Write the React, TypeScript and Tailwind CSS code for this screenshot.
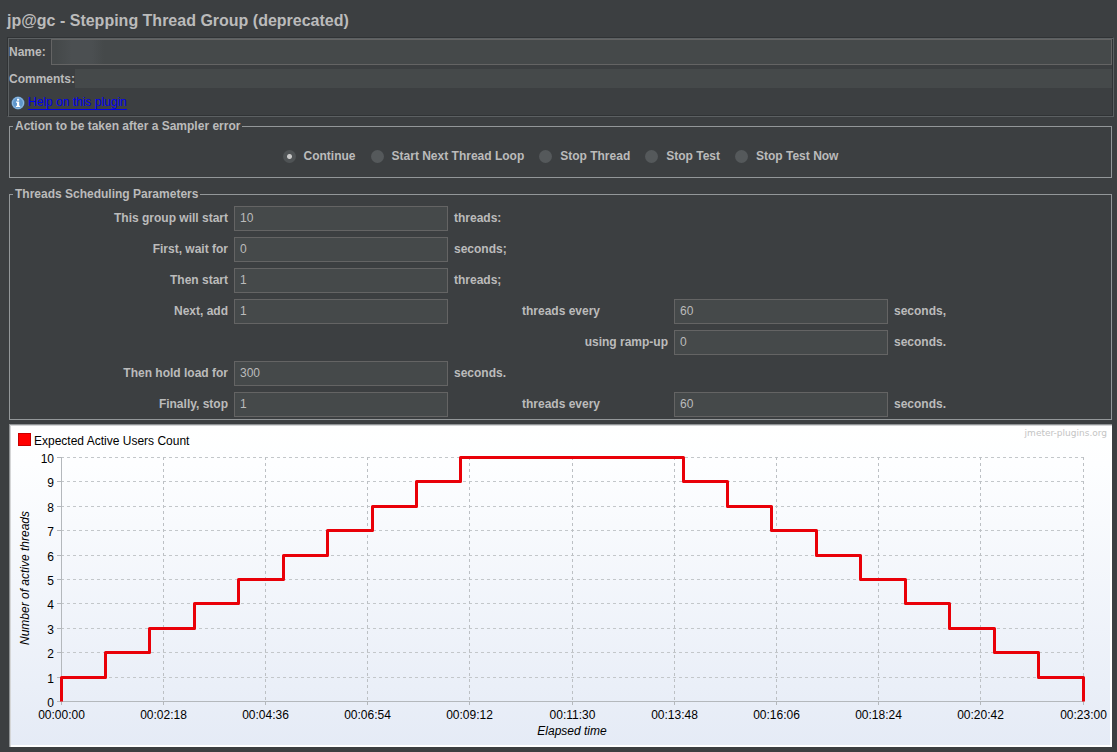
import { useState } from 'react';

const ERROR_ACTIONS = [
	'Continue',
	'Start Next Thread Loop',
	'Stop Thread',
	'Stop Test',
	'Stop Test Now',
];

const TIME_LABELS = [
	'00:00:00',
	'00:02:18',
	'00:04:36',
	'00:06:54',
	'00:09:12',
	'00:11:30',
	'00:13:48',
	'00:16:06',
	'00:18:24',
	'00:20:42',
	'00:23:00',
];

// Plot area inside the 1103x323 chart
const LEFT = 52;
const RIGHT = 1074;
const TOP = 33;
const BOTTOM = 277;
const MINUTES = 23;
const THREADS = 10;

const xAt = (minute: number) =>
	Math.floor(LEFT + (minute * (RIGHT - LEFT)) / MINUTES) + 0.5;
const yAt = (count: number) =>
	Math.round(BOTTOM - (count * (BOTTOM - TOP)) / THREADS) + 0.5;

function buildStepPath() {
	let d = `M${xAt(0)} ${yAt(0)}`;
	for (let i = 1; i <= THREADS; i++) {
		d += ` H${xAt(i - 1)} V${yAt(i)}`;
	}
	for (let i = THREADS - 1; i >= 0; i--) {
		d += ` H${xAt(MINUTES - i)} V${yAt(i)}`;
	}
	return d;
}

function Field({ id, label, value }: { id: string; label: string; value: string }) {
	return (
		<input
			id={id}
			type="text"
			aria-label={label}
			defaultValue={value}
			className="h-[25px] w-full min-w-0 border border-[#646464] bg-[#45494a] px-[5px] pb-[2px] font-normal outline-none focus:border-[#8a9ba8]"
		/>
	);
}

function InfoIcon() {
	return (
		<svg width="14" height="14" viewBox="0 0 14 14" aria-hidden="true">
			<circle cx="7" cy="7" r="6.5" fill="#5f97cc" />
			<circle cx="7" cy="7" r="5.5" fill="none" stroke="#a3c6e4" strokeWidth="0.8" />
			<rect x="6" y="2.7" width="2.2" height="2" fill="#fff" />
			<path d="M5 5.6h3.2v4.2h1v1.2H4.9V9.8H6V6.8H5z" fill="#fff" />
		</svg>
	);
}

function ThreadsChart() {
	return (
		<svg
			viewBox="0 0 1103 323"
			role="img"
			aria-label="Expected Active Users Count"
			className="mx-[2px] mt-1 block h-auto w-[calc(100%-4px)] font-normal"
			fontFamily="'Liberation Sans', Arial, sans-serif"
			fontSize="12"
		>
			<defs>
				<linearGradient id="chartFill" x1="0" y1="0" x2="0" y2="1">
					<stop offset="0" stopColor="#ffffff" />
					<stop offset="0.12" stopColor="#fdfeff" />
					<stop offset="1" stopColor="#e5ebf6" />
				</linearGradient>
			</defs>
			<rect width="1103" height="323" fill="#ffffff" />
			<rect x="2" y="2" width="1099" height="319" fill="url(#chartFill)" />
			<path d="M0 .5H1103M.5 0V323" stroke="#8f9294" />
			<path d="M1 1.5H1103M1.5 1V323" stroke="#d5d6d7" />

			{/* Legend */}
			<rect x="9.5" y="9.5" width="12" height="12" fill="#ff0000" stroke="#c80000" />
			<text x="25" y="21">Expected Active Users Count</text>
			<text
				x="1098"
				y="12"
				fontFamily="'DejaVu Sans', sans-serif"
				fontSize="9"
				textAnchor="end"
				fill="#c4c4c4"
			>
				jmeter-plugins.org
			</text>

			{/* Grid */}
			{Array.from({ length: THREADS + 1 }, (_, i) => (
				<g key={i}>
					{i > 0 && (
						<path
							d={`M${LEFT} ${yAt(i)}H${RIGHT}`}
							stroke="#c3c7ca"
							strokeDasharray="3 3"
						/>
					)}
					<path d={`M${LEFT - 4} ${yAt(i)}h4`} stroke="#b4b8bc" />
					<text x={LEFT - 7} y={yAt(i) + 5} textAnchor="end">
						{i}
					</text>
				</g>
			))}
			{TIME_LABELS.map((label, i) => {
				const x = xAt((i * MINUTES) / 10);
				return (
					<g key={label}>
						{i > 0 && (
							<path
								d={`M${x} ${TOP}V${BOTTOM}`}
								stroke="#bcc0c4"
								strokeDasharray="3 3"
							/>
						)}
						<path d={`M${x} ${BOTTOM}v4`} stroke="#b4b8bc" />
						<text x={x} y="295" textAnchor="middle">
							{label}
						</text>
					</g>
				);
			})}
			<path
				d={`M${LEFT + 0.5} ${TOP}V${BOTTOM + 0.5}H${RIGHT}`}
				fill="none"
				stroke="#b4b8bc"
			/>

			<path
				d={buildStepPath()}
				fill="none"
				stroke="#e90008"
				strokeWidth="3"
				strokeLinejoin="round"
			/>

			{/* Axis titles */}
			<text x="563" y="311" textAnchor="middle" fontStyle="italic">
				Elapsed time
			</text>
			<text
				transform="translate(20 154) rotate(-90)"
				textAnchor="middle"
				fontStyle="italic"
			>
				Number of active threads
			</text>
		</svg>
	);
}

export default function App() {
	const [action, setAction] = useState('Continue');

	return (
		<main className="min-h-screen bg-[#3c3f41] pt-[9px] pr-[3px] pb-[5px] pl-[7px] font-['Liberation_Sans',Arial,sans-serif] text-[12px] leading-[14px] font-bold text-[#bbbbbb]">
			<h1 className="text-base leading-6">jp@gc - Stepping Thread Group (deprecated)</h1>

			{/* Name and comments */}
			<section className="mt-1 border border-t-[#303335] border-r-[#5c6062] border-b-[#5c6062] border-l-[#303335] p-px shadow-[inset_1px_1px_0_#5c6062,inset_-1px_-1px_0_#303335]">
				<div className="flex items-center gap-[5px]">
					<label htmlFor="name">Name:</label>
					<input
						id="name"
						type="text"
						className="h-[26px] min-w-0 flex-1 border border-[#646464] bg-[#45494a] bg-[linear-gradient(90deg,#45494a_4px,#4b4f51_20px,#4b4f51_40px,#45494a_52px)] px-[5px] font-normal outline-none"
					/>
				</div>
				<div className="mt-1 flex items-center">
					<label htmlFor="comments">Comments:</label>
					<input
						id="comments"
						type="text"
						className="h-[19px] min-w-0 flex-1 bg-[#45494a] font-normal outline-none"
					/>
				</div>
				<div className="mt-[7px] mb-[5px] flex items-end gap-[3px] pl-[2px]">
					<InfoIcon />
					<a href="#help" className="border-b border-[#0000ee] font-normal text-[#0000ee]">
						Help on this plugin
					</a>
				</div>
			</section>

			{/* Sampler error action */}
			<fieldset className="mx-[2px] mt-[2px] border border-[#939799] px-[3px] pt-[15px] pb-[13px]">
				<legend className="px-[2px]">Action to be taken after a Sampler error</legend>
				<div className="flex flex-wrap justify-center gap-x-[15px] gap-y-2">
					{ERROR_ACTIONS.map((name) => (
						<label key={name} className="flex h-4 items-center gap-2">
							<input
								type="radio"
								name="error-action"
								checked={action === name}
								onChange={() => setAction(name)}
								className="size-[13px] appearance-none rounded-full bg-[#55595b] checked:bg-[radial-gradient(circle,#c8c8c8_2px,#4f5355_3px)]"
							/>
							{name}
						</label>
					))}
				</div>
			</fieldset>

			{/* Scheduling */}
			<fieldset className="mx-[2px] mt-[9px] border border-[#939799] px-[3px] pt-[5px] pb-[2px]">
				<legend className="px-[2px]">Threads Scheduling Parameters</legend>
				<div className="grid grid-cols-5 items-center gap-[6px] pl-px [&>label]:pb-[2px] [&>span]:pb-[2px]">
					<label htmlFor="total" className="text-right">This group will start</label>
					<Field id="total" label="This group will start" value="10" />
					<span className="col-span-3">threads:</span>

					<label htmlFor="delay" className="text-right">First, wait for</label>
					<Field id="delay" label="First, wait for" value="0" />
					<span className="col-span-3">seconds;</span>

					<label htmlFor="burst" className="text-right">Then start</label>
					<Field id="burst" label="Then start" value="1" />
					<span className="col-span-3">threads;</span>

					<label htmlFor="add" className="text-right">Next, add</label>
					<Field id="add" label="Next, add" value="1" />
					<label htmlFor="add-every" className="text-center">threads every</label>
					<Field id="add-every" label="Add threads every" value="60" />
					<span>seconds,</span>

					<label htmlFor="ramp-up" className="col-span-3 text-right">using ramp-up</label>
					<Field id="ramp-up" label="using ramp-up" value="0" />
					<span>seconds.</span>

					<label htmlFor="hold" className="text-right">Then hold load for</label>
					<Field id="hold" label="Then hold load for" value="300" />
					<span className="col-span-3">seconds.</span>

					<label htmlFor="stop" className="text-right">Finally, stop</label>
					<Field id="stop" label="Finally, stop" value="1" />
					<label htmlFor="stop-every" className="text-center">threads every</label>
					<Field id="stop-every" label="Stop threads every" value="60" />
					<span>seconds.</span>
				</div>
			</fieldset>

			<ThreadsChart />
		</main>
	);
}
